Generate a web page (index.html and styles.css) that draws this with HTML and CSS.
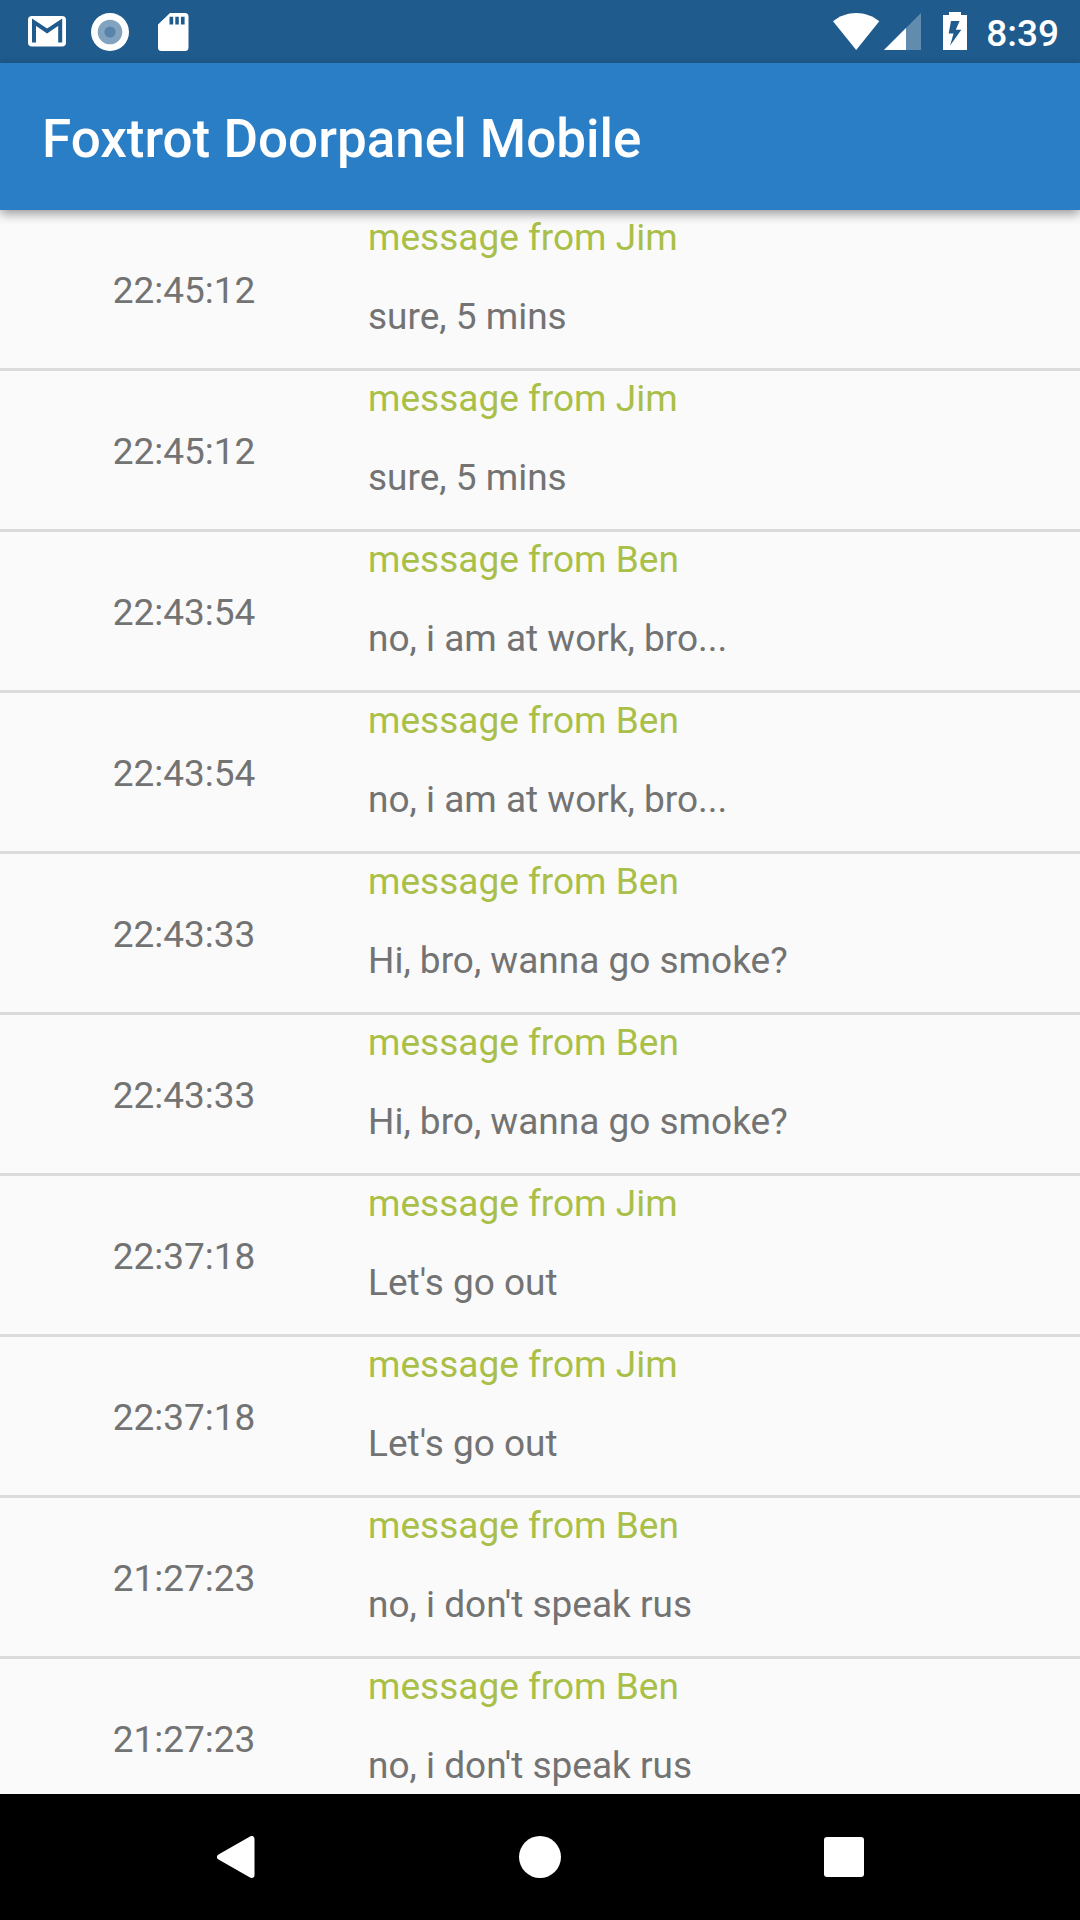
FILE: index.html
```html
<!DOCTYPE html>
<html lang="en">
<head>
<meta charset="utf-8">
<title>Foxtrot Doorpanel Mobile</title>
<link rel="stylesheet" href="styles.css">
</head>
<body>
<div class="screen">
  <div class="status-bar">
    <div class="notifications">
      <svg width="38" height="31" viewBox="0 0 38 31"><rect width="38" height="30.6" rx="4" fill="#fff"/><path d="M6 26.5V6.2L19.1 15 32.2 6.2V26.5" fill="none" stroke="#1f5b8d" stroke-width="4"/></svg>
      <svg width="38" height="38" viewBox="0 0 38 38"><circle cx="19" cy="19" r="19" fill="#fff"/><circle cx="19" cy="19" r="12.3" fill="#82a3bf"/><circle cx="19" cy="19" r="5.6" fill="#5884aa"/></svg>
      <svg width="31" height="38" viewBox="0 0 31 38"><path fill="#fff" fill-rule="evenodd" d="M12 0H27A3.5 3.5 0 0 1 30.5 3.5V34.5A3.5 3.5 0 0 1 27 38H3.5A3.5 3.5 0 0 1 0 34.5V11.5ZM11.5 3.8V11.5H15.2V3.8ZM17.3 3.8V11.5H20.8V3.8ZM22.900 3.8V11.5H26.6V3.8Z"/></svg>
    </div>
    <div class="system">
      <svg class="wifi" width="47" height="38" viewBox="0 0 47 38"><path fill="#fff" d="M23.2 38 0 9.300C6.5 4 14.600 1 23.200 1S39.700 4 46.300 9.300Z"/></svg>
      <svg class="signal" width="37" height="38" viewBox="0 0 37 38"><path fill="#628cae" d="M37 1V38H0Z"/><path fill="#fff" d="M22 16V38H0Z"/></svg>
      <svg class="battery" width="24" height="38" viewBox="0 0 24 38"><path fill="#fff" fill-rule="evenodd" d="M6 0H18V3H24V38H0V3H6ZM8 9 5.7 21.5H10.5L7.2 33.5 18.3 17.7H12.8L16.6 9Z"/></svg>
      <span class="clock">8:39</span>
    </div>
  </div>
  <header class="app-bar"><h1>Foxtrot Doorpanel Mobile</h1></header>
  <main class="messages">
    <div class="row"><time>22:45:12</time><div class="message"><p class="sender">message from Jim</p><p class="text">sure, 5 mins</p></div></div>
    <div class="row"><time>22:45:12</time><div class="message"><p class="sender">message from Jim</p><p class="text">sure, 5 mins</p></div></div>
    <div class="row"><time>22:43:54</time><div class="message"><p class="sender">message from Ben</p><p class="text">no, i am at work, bro...</p></div></div>
    <div class="row"><time>22:43:54</time><div class="message"><p class="sender">message from Ben</p><p class="text">no, i am at work, bro...</p></div></div>
    <div class="row"><time>22:43:33</time><div class="message"><p class="sender">message from Ben</p><p class="text">Hi, bro, wanna go smoke?</p></div></div>
    <div class="row"><time>22:43:33</time><div class="message"><p class="sender">message from Ben</p><p class="text">Hi, bro, wanna go smoke?</p></div></div>
    <div class="row"><time>22:37:18</time><div class="message"><p class="sender">message from Jim</p><p class="text">Let's go out</p></div></div>
    <div class="row"><time>22:37:18</time><div class="message"><p class="sender">message from Jim</p><p class="text">Let's go out</p></div></div>
    <div class="row"><time>21:27:23</time><div class="message"><p class="sender">message from Ben</p><p class="text">no, i don't speak rus</p></div></div>
    <div class="row"><time>21:27:23</time><div class="message"><p class="sender">message from Ben</p><p class="text">no, i don't speak rus</p></div></div>
  </main>
  <nav class="nav-bar">
    <svg class="back" width="38" height="42" viewBox="0 0 38 42"><path d="M3 21 34.5 3V39Z" fill="#fff" stroke="#fff" stroke-width="6" stroke-linejoin="round"/></svg>
    <svg class="home" width="42" height="42" viewBox="0 0 42 42"><circle cx="21" cy="21" r="21" fill="#fff"/></svg>
    <svg class="recent" width="40" height="40" viewBox="0 0 40 40"><rect width="40" height="40" rx="3" fill="#fff"/></svg>
  </nav>
</div>
</body>
</html>
```
FILE: styles.css
```css
* { box-sizing: border-box; }

body {
  margin: 0;
  font-family: Roboto, "Liberation Sans", sans-serif;
}

svg { display: block; flex: none; }

.screen {
  width: 1080px;
  height: 1920px;
  display: flex;
  flex-direction: column;
  overflow: hidden;
  background: #fafafa;
}

.status-bar {
  flex: none;
  height: 63px;
  padding: 0 21px 0 28.4px;
  display: flex;
  justify-content: space-between;
  align-items: center;
  background: #1f5b8d;
}

.notifications {
  display: flex;
  align-items: center;
  gap: 25px;
}

.notifications svg:last-child { margin-left: 4px; }

.system {
  display: flex;
  align-items: center;
}

.system svg { margin-bottom: 1px; }
.signal { margin-left: 4px; }
.battery { margin-left: 22px; }

.clock {
  margin-left: 19px;
  padding-top: 5px;
  font-size: 37px;
  font-weight: 500;
  line-height: 44px;
  color: #fff;
}

.app-bar {
  flex: none;
  height: 147px;
  padding-left: 42px;
  display: flex;
  align-items: center;
  position: relative;
  z-index: 1;
  background: #2a7ec5;
  box-shadow: 0 4px 10px rgba(0, 0, 0, 0.38);
}

h1 {
  margin: 0;
  padding-top: 5px;
  font-size: 53px;
  font-weight: 500;
  line-height: 62px;
  color: #fff;
}

.messages {
  flex: 1;
  min-height: 0;
  overflow: hidden;
}

.row {
  height: 161px;
  display: grid;
  grid-template-columns: 368px 1fr;
  border-bottom: 3px solid #dbdbdb;
  color: #737373;
}

time {
  align-self: center;
  padding-top: 4px;
  text-align: center;
  font-size: 37px;
  line-height: 44px;
}

.message p {
  margin: 0;
  font-size: 37px;
  line-height: 44px;
}

.message .sender {
  padding-top: 6px;
  color: #a9bf47;
}

.message .text { padding-top: 35px; }

.nav-bar {
  flex: none;
  height: 126px;
  display: flex;
  align-items: center;
  padding-left: 217px;
  background: #000;
}

.home { margin-left: 264px; }
.recent { margin-left: 263px; }
```
